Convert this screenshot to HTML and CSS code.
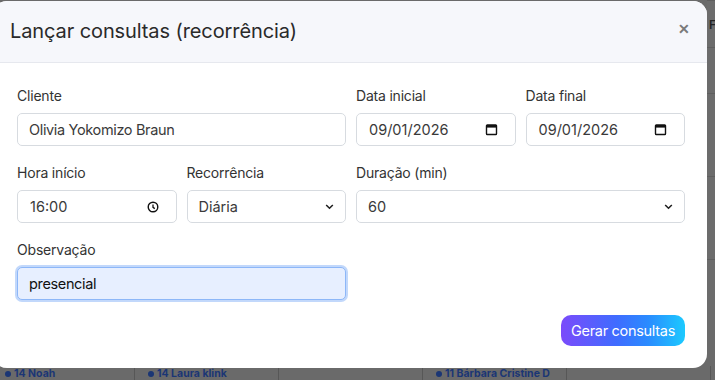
FILE: index.html
```html
<!DOCTYPE html>
<html lang="pt-BR">
<head>
<meta charset="utf-8">
<link rel="stylesheet" href="styles.css">
</head>
<body>
<div class="backdrop">
  <div class="cal-top">
    <div class="cal-edge"><span class="edge-letter">F</span></div>
  </div>
  <div class="cal-row">
    <div class="cell c1"><span class="evt"><i class="dot"></i>14 Noah</span></div>
    <div class="cell"><span class="evt"><i class="dot"></i>14 Laura klink</span></div>
    <div class="cell"></div>
    <div class="cell"><span class="evt"><i class="dot"></i>11 Bárbara Cristine D</span></div>
    <div class="cell"></div>
    <div class="cell"></div>
  </div>
</div>

<div class="modal">
  <div class="modal-header">
    <h1 class="modal-title">Lançar consultas (recorrência)</h1>
    <span class="close">&#x2715;</span>
  </div>
  <div class="modal-body">
    <div class="grid">
      <div class="field span2">
        <label class="lbl">Cliente</label>
        <div class="ctl"><span class="val">Olivia Yokomizo Braun</span></div>
      </div>
      <div class="field">
        <label class="lbl">Data inicial</label>
        <div class="ctl date"><span class="val">09/01/2026</span>
          <svg class="ico" width="13" height="13" viewBox="0 0 13 13"><rect x="1.5" y="2" width="10" height="9.5" rx="0.8" fill="none" stroke="#111" stroke-width="1.4"/><rect x="1.5" y="2" width="10" height="2.6" fill="#111"/></svg>
        </div>
      </div>
      <div class="field">
        <label class="lbl">Data final</label>
        <div class="ctl date"><span class="val">09/01/2026</span>
          <svg class="ico" width="13" height="13" viewBox="0 0 13 13"><rect x="1.5" y="2" width="10" height="9.5" rx="0.8" fill="none" stroke="#111" stroke-width="1.4"/><rect x="1.5" y="2" width="10" height="2.6" fill="#111"/></svg>
        </div>
      </div>

      <div class="field">
        <label class="lbl">Hora início</label>
        <div class="ctl date"><span class="val">16:00</span>
          <svg class="ico" width="12" height="12" viewBox="0 0 12 12"><circle cx="6" cy="6" r="4.8" fill="none" stroke="#111" stroke-width="1.4"/><path d="M6 3.4V6.3L7.8 7.6" fill="none" stroke="#111" stroke-width="1.3"/></svg>
        </div>
      </div>
      <div class="field">
        <label class="lbl">Recorrência</label>
        <div class="ctl sel"><span class="val">Diária</span>
          <svg class="chev" width="9" height="7" viewBox="0 0 9 7"><path d="M1.2 2L4.5 5.2L7.8 2" fill="none" stroke="#222" stroke-width="1.6"/></svg>
        </div>
      </div>
      <div class="field span2">
        <label class="lbl">Duração (min)</label>
        <div class="ctl sel"><span class="val">60</span>
          <svg class="chev" width="9" height="7" viewBox="0 0 9 7"><path d="M1.2 2L4.5 5.2L7.8 2" fill="none" stroke="#222" stroke-width="1.6"/></svg>
        </div>
      </div>

      <div class="field span2">
        <label class="lbl">Observação</label>
        <div class="ctl focus"><span class="val dark">presencial</span></div>
      </div>
    </div>
    <div class="actions">
      <button class="btn">Gerar consultas</button>
    </div>
  </div>
</div>
</body>
</html>
```

FILE: styles.css
```css
* { box-sizing: border-box; }
html, body { margin: 0; padding: 0; }
body {
  width: 715px;
  height: 380px;
  overflow: hidden;
  position: relative;
  background: #6a6a6a;
  font-family: "Inter", "Liberation Sans", sans-serif;
}
.backdrop {
  height: 380px;
  display: flex;
  flex-direction: column;
  justify-content: space-between;
}
.cal-top {
  display: flex;
  justify-content: flex-end;
}
.cal-edge {
  width: 8px;
  height: 330px;
  border-top: 1px solid #5e5e5e;
  background:
    linear-gradient(#5f5f5f, #5f5f5f) 0 46px / 100% 1px no-repeat,
    linear-gradient(#5f5f5f, #5f5f5f) 0 92px / 100% 1px no-repeat,
    linear-gradient(#5f5f5f, #5f5f5f) 0 175px / 100% 1px no-repeat,
    linear-gradient(#5f5f5f, #5f5f5f) 0 258px / 100% 1px no-repeat,
    #6c6c6c;
  padding: 12px 0 0 2px;
}
.edge-letter {
  font-size: 12px;
  color: #222;
  font-weight: 600;
}
.cal-row {
  display: flex;
  height: 14px;
  margin-left: -9px;
  margin-bottom: 0;
}
.cell {
  width: 144px;
  flex: none;
  border-right: 1px solid #575757;
  padding-left: 13px;
  height: 14px;
  display: flex;
  align-items: flex-end;
}
.evt {
  font-size: 10.5px;
  line-height: 13px;
  font-weight: 700;
  color: #1b3675;
  display: inline-flex;
  align-items: center;
  gap: 3px;
}
.c1 { padding-left: 14px; }
.dot {
  width: 6px;
  height: 6px;
  border-radius: 50%;
  background: #1b3675;
  display: inline-block;
}

.modal {
  position: absolute;
  left: -7px;
  top: 1px;
  width: 714px;
  height: 367px;
  background: #fff;
  border-radius: 14px;
  overflow: hidden;
}
.modal-header {
  height: 62px;
  background: #f6f7fb;
  border-bottom: 1px solid #e6e8ee;
  display: flex;
  align-items: center;
  justify-content: space-between;
  padding: 0 17px 0 17px;
}
.modal-title {
  margin: 0;
  font-size: 20px;
  font-weight: 400;
  color: #2a2a2a;
  letter-spacing: -0.1px;
  padding-bottom: 2px;
}
.close {
  font-size: 14px;
  font-weight: 700;
  color: #7a7a7a;
  margin-top: -6px;
}
.modal-body {
  padding: 23px 22px 0 24px;
}
.grid {
  display: grid;
  grid-template-columns: repeat(4, 1fr);
  column-gap: 10px;
  row-gap: 17px;
}
.span2 { grid-column: span 2; }
.lbl {
  display: block;
  font-size: 14px;
  line-height: 20px;
  color: #333;
  letter-spacing: -0.2px;
  margin-bottom: 7px;
}
.ctl {
  height: 33px;
  border: 1px solid #d7dbe0;
  border-radius: 5px;
  display: flex;
  align-items: center;
  justify-content: space-between;
  padding: 0 14px 0 11px;
  background: #fff;
}
.date { padding-left: 12px; padding-right: 17px; }
.sel { padding-right: 11px; }
.val {
  font-size: 14.5px;
  color: #3a3a3a;
  letter-spacing: -0.35px;
}
.date .val, .sel .val { letter-spacing: 0; }
.val.dark { color: #111; }
.ico { display: block; }
.chev { display: block; }
.focus {
  background: #e7efff;
  border-color: #8db7f8;
  box-shadow: 0 0 0 2px #c2d8fb;
}
.actions {
  display: flex;
  justify-content: flex-end;
  margin-top: 15px;
}
.btn {
  width: 124px;
  height: 31px;
  border: none;
  border-radius: 10px;
  background: linear-gradient(90deg, #7b4bfb 0%, #3f6cff 45%, #2a8bff 70%, #1ccaff 100%);
  color: #fff;
  font-family: "Inter", "Liberation Sans", sans-serif;
  font-size: 14.5px;
  letter-spacing: -0.3px;
  padding: 0;
}
```
